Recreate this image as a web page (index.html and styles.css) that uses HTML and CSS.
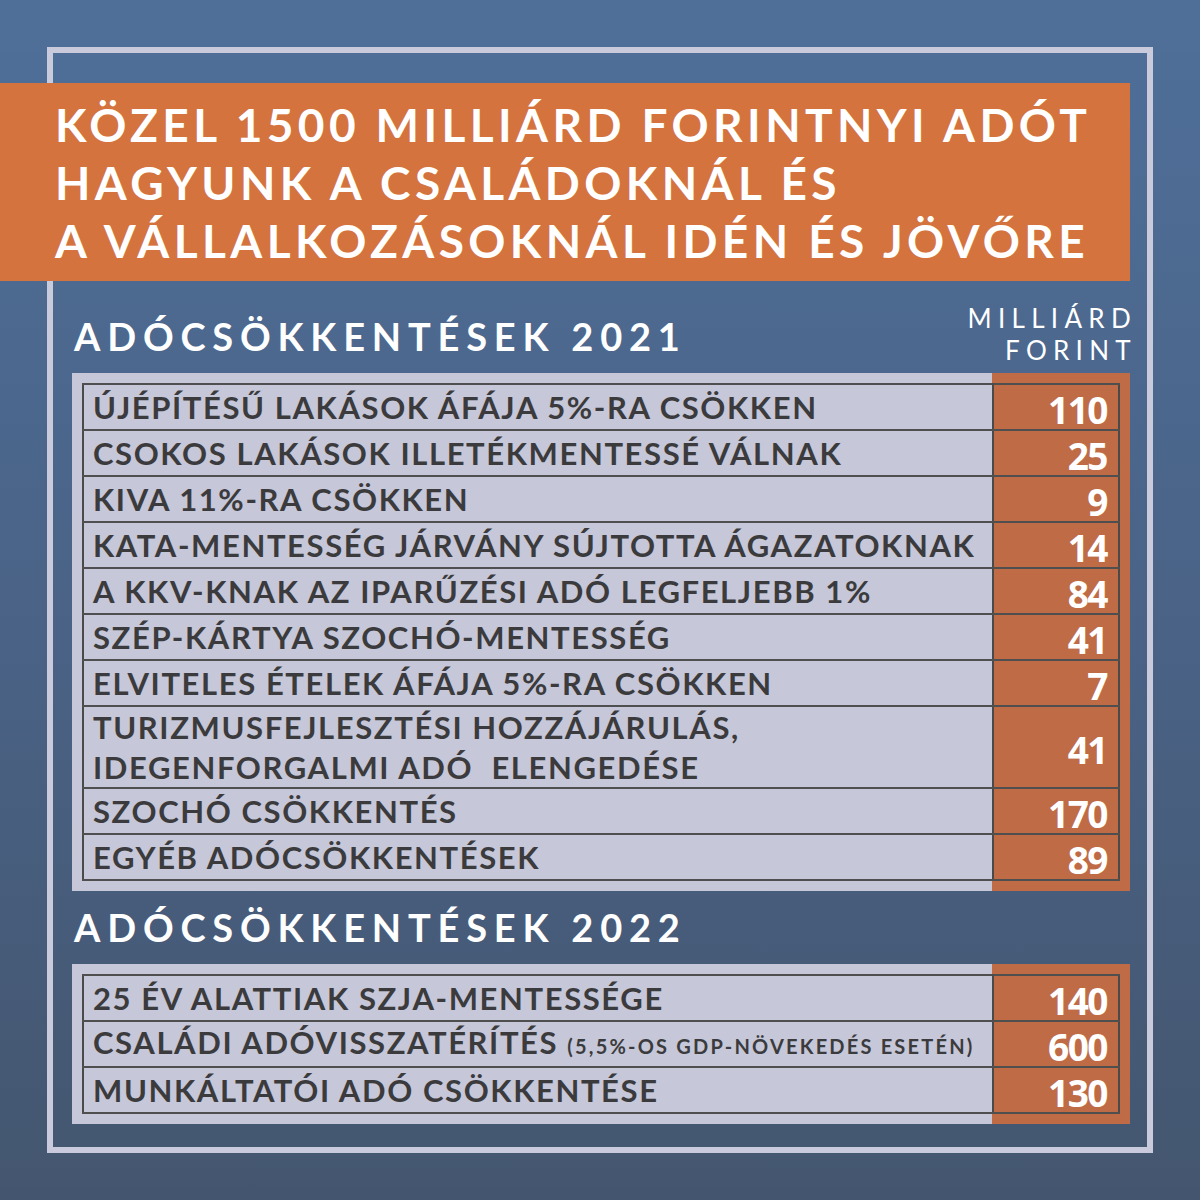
FILE: index.html
```html
<!DOCTYPE html>
<html lang="hu">
<head>
<meta charset="utf-8">
<link rel="stylesheet" href="styles.css">
</head>
<body>
<div class="page">
  <div class="frame">
    <div class="banner">
      <h1 class="title">KÖZEL 1500 MILLIÁRD FORINTNYI ADÓT<br>HAGYUNK A CSALÁDOKNÁL ÉS<br>A VÁLLALKOZÁSOKNÁL IDÉN ÉS JÖVŐRE</h1>
    </div>

    <div class="head head-first">
      <h2 class="section">ADÓCSÖKKENTÉSEK 2021</h2>
      <div class="unit">MILLIÁRD<br>FORINT</div>
    </div>
    <div class="tbox">
      <table class="tbl">
        <tr><td class="lbl">ÚJÉPÍTÉSŰ LAKÁSOK ÁFÁJA 5%-RA CSÖKKEN</td><td class="num">110</td></tr>
        <tr><td class="lbl">CSOKOS LAKÁSOK ILLETÉKMENTESSÉ VÁLNAK</td><td class="num">25</td></tr>
        <tr><td class="lbl">KIVA 11%-RA CSÖKKEN</td><td class="num">9</td></tr>
        <tr><td class="lbl">KATA-MENTESSÉG JÁRVÁNY SÚJTOTTA ÁGAZATOKNAK</td><td class="num">14</td></tr>
        <tr><td class="lbl">A KKV-KNAK AZ IPARŰZÉSI ADÓ LEGFELJEBB 1%</td><td class="num">84</td></tr>
        <tr><td class="lbl">SZÉP-KÁRTYA SZOCHÓ-MENTESSÉG</td><td class="num">41</td></tr>
        <tr><td class="lbl">ELVITELES ÉTELEK ÁFÁJA 5%-RA CSÖKKEN</td><td class="num">7</td></tr>
        <tr class="double"><td class="lbl">TURIZMUSFEJLESZTÉSI HOZZÁJÁRULÁS,<br>IDEGENFORGALMI ADÓ&nbsp; ELENGEDÉSE</td><td class="num">41</td></tr>
        <tr><td class="lbl">SZOCHÓ CSÖKKENTÉS</td><td class="num">170</td></tr>
        <tr><td class="lbl">EGYÉB ADÓCSÖKKENTÉSEK</td><td class="num">89</td></tr>
      </table>
    </div>

    <div class="head head-second">
      <h2 class="section">ADÓCSÖKKENTÉSEK 2022</h2>
    </div>
    <div class="tbox">
      <table class="tbl">
        <tr><td class="lbl">25 ÉV ALATTIAK SZJA-MENTESSÉGE</td><td class="num">140</td></tr>
        <tr><td class="lbl">CSALÁDI ADÓVISSZATÉRÍTÉS <span class="small">(5,5%-OS GDP-NÖVEKEDÉS ESETÉN)</span></td><td class="num">600</td></tr>
        <tr><td class="lbl">MUNKÁLTATÓI ADÓ CSÖKKENTÉSE</td><td class="num">130</td></tr>
      </table>
    </div>
  </div>
</div>
</body>
</html>
```

FILE: styles.css
```css
* { box-sizing: border-box; }

html, body {
  margin: 0;
  padding: 0;
}

body {
  width: 1200px;
  height: 1200px;
  font-family: "Lato", "Liberation Sans", sans-serif;
}

.page {
  width: 1200px;
  height: 1200px;
  padding: 47px;
  background: linear-gradient(180deg, #4f6f99 0%, #4a6387 50%, #44566f 100%);
}

.frame {
  height: 100%;
  border: 6px solid #c9cadc;
  padding-top: 30px;
}

.banner {
  margin-left: -53px;
  width: 1130px;
  height: 198px;
  background: #d4733e;
  padding-left: 55px;
  display: flex;
  flex-direction: column;
  justify-content: center;
}

.title {
  margin: 0;
  color: #ffffff;
  font-family: "Lato", "Liberation Sans", sans-serif;
  font-weight: 700;
  font-size: 46px;
  line-height: 58px;
  letter-spacing: 4.4px;
  padding-top: 2px;
  white-space: nowrap;
}

.head {
  display: flex;
  justify-content: space-between;
  align-items: flex-end;
  margin-left: 21px;
  width: 1056px;
}

.head-first {
  height: 92px;
}

.head-second {
  height: 73px;
}

.section {
  margin: 0;
  color: #ffffff;
  font-family: "Lato", "Liberation Sans", sans-serif;
  font-weight: 700;
  font-size: 38px;
  line-height: 1;
  letter-spacing: 6.8px;
  padding-bottom: 18px;
  white-space: nowrap;
}

.unit {
  color: #ffffff;
  font-family: "Lato", "Liberation Sans", sans-serif;
  font-weight: 400;
  font-size: 26px;
  line-height: 32px;
  letter-spacing: 6.3px;
  text-align: right;
  padding-bottom: 7px;
  margin-right: -7px;
}

.tbox {
  margin-left: 19px;
  width: 1058px;
  padding: 10px;
  background: linear-gradient(90deg, #c6c7d8 0, #c6c7d8 920px, #bf6c46 920px, #bf6c46 100%);
}

.tbl {
  width: 100%;
  border-collapse: collapse;
  border: 2px solid #4a4a4a;
}

.tbl tr {
  height: 46px;
}

.tbl tr.double {
  height: 81px;
}

.tbl td {
  border-top: 2px solid #4f4f4f;
  border-bottom: 2px solid #4f4f4f;
  padding: 0;
}

.lbl {
  width: 910px;
  padding-left: 9px !important;
  color: #3b3b3d;
  font-family: "Lato", "Liberation Sans", sans-serif;
  font-weight: 700;
  font-size: 31px;
  line-height: 38px;
  letter-spacing: 1.6px;
  border-right: 2px solid #4a4a4a;
  vertical-align: middle;
  white-space: nowrap;
}

.double .lbl {
  line-height: 40px;
}

.small {
  font-size: 20px;
  letter-spacing: 2.2px;
}

.num {
  width: 128px;
  text-align: right;
  padding-right: 11px !important;
  padding-top: 6px !important;
  color: #ffffff;
  font-family: "Open Sans", "Liberation Sans", sans-serif;
  font-weight: 700;
  font-size: 37px;
  line-height: 34px;
  letter-spacing: -1.5px;
  vertical-align: middle;
}
```
